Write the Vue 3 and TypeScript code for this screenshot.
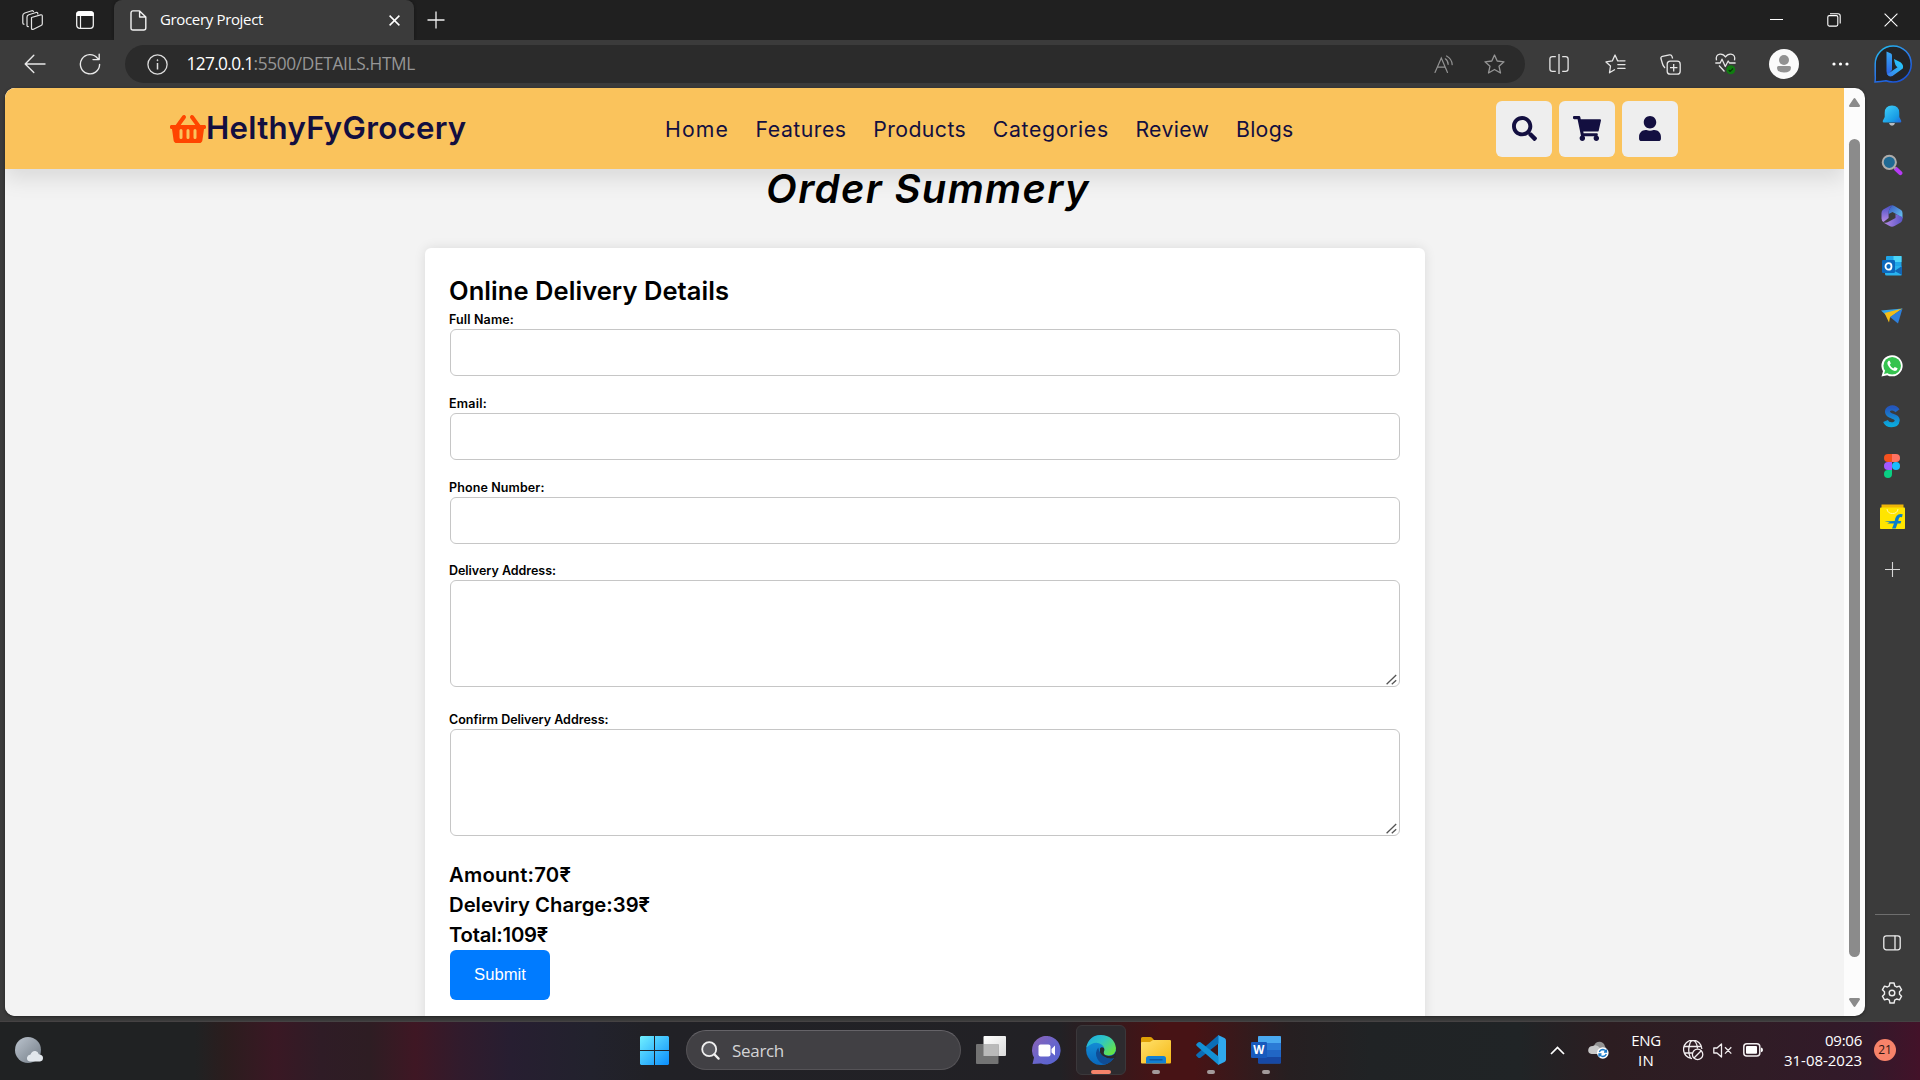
<script setup lang="ts">
import type { Directive } from 'vue'

interface NavItem { label: string; width: number }
interface Field { label: string; width: number; multiline: boolean }
interface Line { text: string; width: number }

// Spreads the letters of an element so that it takes the given width in pixels.
const vFit: Directive<HTMLElement, number> = {
  mounted(el, binding) {
    const count = (el.textContent ?? '').length
    const natural = el.getBoundingClientRect().width
    if (count > 0) el.style.letterSpacing = `${((binding.value - natural) / count).toFixed(3)}px`
  },
}

const nav: NavItem[] = [
  { label: 'Home', width: 64 },
  { label: 'Features', width: 91 },
  { label: 'Products', width: 93 },
  { label: 'Categories', width: 116 },
  { label: 'Review', width: 74 },
  { label: 'Blogs', width: 57.5 },
]

const fields: Field[] = [
  { label: 'Full Name:', width: 65, multiline: false },
  { label: 'Email:', width: 38, multiline: false },
  { label: 'Phone Number:', width: 95.5, multiline: false },
  { label: 'Delivery Address:', width: 107, multiline: true },
  { label: 'Confirm Delivery Address:', width: 159.5, multiline: true },
]

const amounts: Line[] = [
  { text: 'Amount:70₹', width: 122 },
  { text: 'Deleviry Charge:39₹', width: 201 },
  { text: 'Total:109₹', width: 99 },
]
</script>

<template>
  <div class="screen">
    <div class="tabs">
      <svg class="t-work" width="22" height="22" viewBox="0 0 22 22" fill="none" stroke="#e4e4e4" stroke-width="1.2" stroke-linejoin="round">
        <path d="M9.5 7.5 L18.6 4.8 Q20.3 4.5 20.3 6 V13.7 Q20.3 15 19 15.5 L11.5 19.2 Q9.5 20 9.5 18.2 Z" />
        <path d="M15.8 4.5 V3.6 Q15.6 2 14 2.5 L6.8 4.8 Q5 5.5 5 7 V15.7 Q5 16.7 6.8 16.7" />
        <path d="M11.5 2 Q11.5 .4 9.8 .8 L2.8 3 Q.8 3.8 .8 5.6 V13 Q.8 14.4 2.4 14.4" />
      </svg>
      <svg class="t-tabs" width="20" height="20" viewBox="0 0 20 20">
        <rect x="1.7" y="1.7" width="16.6" height="16.6" rx="3" fill="none" stroke="#eee" stroke-width="1.3" />
        <path d="M1.2 6 V4 Q1.2 1.2 4 1.2 H16 Q18.8 1.2 18.8 4 V6 Z" fill="#fff" /><path d="M5.5 6 V18" stroke="#eee" stroke-width="1.2" />
      </svg>
      <div class="tab">
        <svg width="17" height="21" viewBox="0 0 17 21" fill="none" stroke="#f2f2f2" stroke-width="1.4" stroke-linejoin="round"><path d="M3 .9 H9.6 L15.8 7 V18 Q15.8 20 13.8 20 H3 Q1 20 1 18 V3 Q1 .9 3 .9 Z M9.6 1 V7 H15.8" /></svg>
        <span v-fit="103" class="tab-title">Grocery Project</span>
        <svg class="tab-x" width="11" height="11" viewBox="0 0 11 11" stroke="#fff" stroke-width="1.5"><path d="M.6 .6 L10.4 10.4 M10.4 .6 L.6 10.4" /></svg>
      </div>
      <svg class="t-plus" width="18" height="18" viewBox="0 0 18 18" stroke="#f0f0f0" stroke-width="1.3"><path d="M9 .5 V17.5 M.5 9 H17.5" /></svg>
      <div class="win">
        <svg width="13" height="14" viewBox="0 0 13 14"><path d="M0 6.5 H13" stroke="#fff" /></svg>
        <svg width="14" height="14" viewBox="0 0 14 14" fill="none" stroke="#fff" stroke-width="1.1"><rect x=".8" y="2.6" width="10" height="10.5" rx="1.5" /><path d="M3 .7 H11 Q13.2 .7 13.2 3 V10.5" /></svg>
        <svg width="14" height="14" viewBox="0 0 14 14" stroke="#fff" stroke-width="1.1"><path d="M.6 .6 L13.4 13.4 M13.4 .6 L.6 13.4" /></svg>
      </div>
    </div>

    <div class="toolbar">
      <svg class="back" width="22" height="20" viewBox="0 0 22 20" fill="none" stroke="#e8e8e8" stroke-width="1.4" stroke-linecap="round" stroke-linejoin="round"><path d="M21 10 H1.5 M9.8 1.2 L1.2 10 L9.8 18.6" /></svg>
      <svg class="reload" width="22" height="22" viewBox="0 0 22 22" fill="none" stroke="#e8e8e8" stroke-width="1.4" stroke-linecap="round" stroke-linejoin="round"><path d="M20.6 11.5 A9.6 9.6 0 1 1 18.3 5 L20 6.5 M20.2 1.2 V6.6 H14" /></svg>
      <div class="address">
        <svg width="21" height="21" viewBox="0 0 21 21" fill="none" stroke="#ddd" stroke-width="1.3"><circle cx="10.5" cy="10.5" r="9.6" /><path d="M10.5 9 V15.5" stroke-width="1.5" /><circle cx="10.5" cy="6.2" r=".6" fill="#ddd" stroke-width=".6" /></svg>
        <span class="url"><b v-fit="67">127.0.0.1</b><i v-fit="161.5">:5500/DETAILS.HTML</i></span>
        <svg class="read" width="20" height="19" viewBox="0 0 20 19" fill="none" stroke="#929292" stroke-width="1.2" stroke-linecap="round"><path d="M1 17.5 L7.3 3 L13.5 17.5 M3.4 12.2 H11.2 M11.3 3.8 Q14 5.5 14.2 9.4 M12.6 1 Q17.8 3.8 18.2 9.6" /></svg>
        <svg class="star" width="21" height="20" viewBox="0 0 21 20" fill="none" stroke="#959595" stroke-width="1.3" stroke-linejoin="round"><path d="M10.5 1 L13.2 7 L20 7.8 L15 12.2 L16.5 19 L10.5 15.5 L4.5 19 L6 12.2 L1 7.8 L7.8 7 Z" /></svg>
      </div>
      <svg class="split" width="20" height="20" viewBox="0 0 20 20" fill="none" stroke="#e6e6e6" stroke-width="1.3"><path d="M6.8 2.6 H3.4 Q.9 2.6 .9 5 V15 Q.9 17.4 3.4 17.4 H6.8 M13.2 2.6 H16.6 Q19.1 2.6 19.1 5 V15 Q19.1 17.4 16.6 17.4 H13.2 M10 0 V20" /></svg>
      <svg class="favs" width="21" height="20" viewBox="0 0 21 20" fill="none" stroke="#e6e6e6" stroke-width="1.3" stroke-linejoin="round" stroke-linecap="round"><path d="M14 6.9 H12.7 L10 1 L7.3 6.9 L1 7.9 L5.5 12 L4.5 18.8 L9.5 15.8 M15 6.8 H20 M12.8 10.6 H20 M12.8 14.4 H20" /></svg>
      <svg class="coll" width="21" height="21" viewBox="0 0 21 21" fill="none" stroke="#e6e6e6" stroke-width="1.3" stroke-linejoin="round"><rect x="7.2" y="7.2" width="13" height="13" rx="3" /><path d="M13.7 10 V17.4 M10 13.7 H17.4 M5 14 Q2.9 12 2.4 9.5 L1 4.8 Q.5 2.9 2.4 2.4 L9.5 .9 Q11.5 .6 12 2.4 L12.6 4.5" /></svg>
      <svg class="heart" width="21" height="22" viewBox="0 0 21 22" fill="none" stroke="#e6e6e6" stroke-width="1.3" stroke-linejoin="round"><path d="M1.5 7.3 Q.3 1.7 5 1.2 Q8.5 .9 10.5 4 Q12.5 .9 16 1.2 Q20.7 1.7 19.5 7.3 M.3 10 H5.2 L7 6.2 L10.3 13.5 L13.2 8 L14.5 10 H20.6 M4 12.5 L9.5 18.5" /><circle cx="15.8" cy="16.8" r="4.5" fill="#107c10" stroke="none" /><path d="M13.7 17 L15.2 18.4 L18 15.5" stroke="#073807" /></svg>
      <svg class="avatar" width="30" height="30" viewBox="0 0 30 30"><circle cx="15" cy="15" r="15" fill="#fafafa" /><circle cx="15" cy="11" r="5" fill="#919191" /><path d="M8 18.5 Q8 17 9.5 17 H20.5 Q22 17 22 18.5 Q22 23.5 15 23.5 Q8 23.5 8 18.5" fill="#919191" /></svg>
      <svg class="dots" width="17" height="4" viewBox="0 0 17 4" fill="#fff"><circle cx="2" cy="2" r="1.6" /><circle cx="8.5" cy="2" r="1.6" /><circle cx="15" cy="2" r="1.6" /></svg>
      <svg class="bing" width="38" height="38" viewBox="0 0 38 38">
        <defs>
          <linearGradient id="bingRing" x1="0" y1="0" x2=".6" y2="1"><stop offset="0" stop-color="#20c5ee" /><stop offset=".5" stop-color="#2b82ee" /><stop offset="1" stop-color="#1a55d8" /></linearGradient>
          <linearGradient id="bingB" x1="0" y1="0" x2="0" y2="1"><stop offset="0" stop-color="#38a9f5" /><stop offset="1" stop-color="#2a62e4" /></linearGradient>
          <linearGradient id="bingC" x1="1" y1="0" x2="0" y2="1"><stop offset="0" stop-color="#23d5ff" /><stop offset="1" stop-color="#3a7bea" /></linearGradient>
        </defs>
        <path d="M1 37 Q1.5 34 1.2 30 V19 A18 18 0 1 1 19 37 Q15 37 12 35.8 Q7 36.8 1 37 Z" fill="#232427" stroke="url(#bingRing)" stroke-width="1.5" />
        <path d="M12.5 6.5 L17 8.4 Q18 9 18 10.5 V25 L14 30 Q12.5 29 12.5 26 Z" fill="url(#bingB)" />
        <path d="M20 14 L26.5 17.3 Q30 20 28.8 23.5 L18.5 31 Q15 32.5 13.2 29.3 L23.5 22.2 Q21 21.2 20 14 Z" fill="url(#bingC)" />
      </svg>
    </div>

    <div class="middle">
      <div class="page">
        <div class="view">
          <header class="header">
            <div class="logo">
              <svg width="36" height="32" viewBox="0 0 576 512" fill="#ff4500"><path fill-rule="evenodd" d="M576 216v16c0 13.255-10.745 24-24 24h-8l-26.113 182.788C514.509 462.435 494.257 480 470.37 480H105.63c-23.887 0-44.139-17.565-47.518-41.212L32 256h-8c-13.255 0-24-10.745-24-24v-16c0-13.255 10.745-24 24-24h67.341l106.78-146.821c10.395-14.292 30.407-17.453 44.701-7.058 14.293 10.395 17.453 30.408 7.058 44.701L170.477 192h235.046L326.12 82.821c-10.395-14.292-7.234-34.306 7.059-44.701 14.291-10.395 34.306-7.235 44.701 7.058L484.659 192H552c13.255 0 24 10.745 24 24zM312 392V280a24 24 0 0 0-48 0v112a24 24 0 0 0 48 0zm112 0V280a24 24 0 0 0-48 0v112a24 24 0 0 0 48 0zm-224 0V280a24 24 0 0 0-48 0v112a24 24 0 0 0 48 0z" /></svg>
              <span v-fit="260.5">HelthyFyGrocery</span>
            </div>
            <nav class="nav"><a v-for="n in nav" :key="n.label" v-fit="n.width">{{ n.label }}</a></nav>
            <div class="tools">
              <span class="tool"><svg width="25" height="25" viewBox="0 0 512 512"><path d="M505 442.7L405.3 343c-4.5-4.5-10.6-7-17-7H372c27.6-35.3 44-79.7 44-128C416 93.1 322.9 0 208 0S0 93.1 0 208s93.1 208 208 208c48.3 0 92.7-16.4 128-44v16.3c0 6.4 2.5 12.5 7 17l99.7 99.7c9.4 9.4 24.6 9.4 33.9 0l28.3-28.3c9.4-9.4 9.4-24.6.1-34zM208 336c-70.7 0-128-57.2-128-128 0-70.7 57.2-128 128-128 70.7 0 128 57.2 128 128 0 70.7-57.2 128-128 128z" /></svg></span>
              <span class="tool"><svg width="28" height="25" viewBox="0 0 576 512"><path d="M528.12 301.319l47.273-208C578.806 78.301 567.391 64 551.99 64H159.208l-9.166-44.81C147.758 8.021 137.93 0 126.529 0H24C10.745 0 0 10.745 0 24v16c0 13.255 10.745 24 24 24h69.883l70.248 343.435C147.325 417.1 136 435.222 136 456c0 30.928 25.072 56 56 56s56-25.072 56-56c0-15.674-6.447-29.835-16.824-40h209.647C430.447 426.165 424 440.326 424 456c0 30.928 25.072 56 56 56s56-25.072 56-56c0-22.172-12.888-41.332-31.579-50.405l5.517-24.276c3.413-15.018-8.002-29.319-23.403-29.319H218.117l-6.545-32h293.145c11.206 0 20.92-7.754 23.403-18.681z" /></svg></span>
              <span class="tool"><svg width="22" height="25" viewBox="0 0 448 512"><path d="M224 256c70.7 0 128-57.3 128-128S294.7 0 224 0 96 57.3 96 128s57.3 128 128 128zm89.6 32h-16.7c-22.2 10.2-46.9 16-72.9 16s-50.6-5.8-72.9-16h-16.7C60.2 288 0 348.2 0 422.4V464c0 26.5 21.5 48 48 48h352c26.5 0 48-21.5 48-48v-41.6c0-74.2-60.2-134.4-134.4-134.4z" /></svg></span>
            </div>
          </header>
          <h1 class="title"><span v-fit="324">Order Summery</span></h1>
          <form class="card">
            <h2><span v-fit="280">Online Delivery Details</span></h2>
            <div v-for="f in fields" :key="f.label" class="field">
              <label><span v-fit="f.width">{{ f.label }}</span></label>
              <div v-if="f.multiline" class="area">
                <textarea></textarea>
                <svg class="grip" width="11" height="11" viewBox="0 0 11 11" stroke="#555" stroke-width="1.3"><path d="M.6 10.3 L10.2 1 M5.8 10.3 L10.2 6.2" /></svg>
              </div>
              <input v-else type="text" />
            </div>
            <p v-for="a in amounts" :key="a.text"><span v-fit="a.width">{{ a.text }}</span></p>
            <button type="button">Submit</button>
          </form>
        </div>
        <div class="scroll">
          <svg width="11" height="9" viewBox="0 0 11 9" fill="#8b8b8b"><path d="M5.5 0 Q6 0 6.5 .8 L11 7.5 Q11 9 10 9 H1 Q0 9 0 7.5 L4.5 .8 Q5 0 5.5 0" /></svg>
          <div class="thumb"></div>
          <svg width="11" height="9" viewBox="0 0 11 9" fill="#8b8b8b"><path d="M5.5 9 Q6 9 6.5 8.2 L11 1.5 Q11 0 10 0 H1 Q0 0 0 1.5 L4.5 8.2 Q5 9 5.5 9" /></svg>
        </div>
      </div>

      <aside class="side">
        <span><svg width="20" height="22" viewBox="0 0 20 22"><defs><linearGradient id="bell" x1="0" y1="0" x2="1" y2="1"><stop offset="0" stop-color="#43d3fa" /><stop offset=".7" stop-color="#189ce5" /><stop offset="1" stop-color="#2464df" /></linearGradient></defs><path d="M7 18 H13 Q12.5 20.7 10 20.7 Q7.5 20.7 7 18" fill="#b9bcc0" /><path d="M10 .5 Q17.3 .5 17.3 8 V12 L19.3 16 Q19.5 17.5 18 17.5 H2 Q.5 17.5 .7 16 L2.7 12 V8 Q2.7 .5 10 .5" fill="url(#bell)" /></svg></span>
        <span class="side-find"><svg width="22" height="22" viewBox="0 0 22 22"><path d="M15 15 L19.3 19" stroke="#b63af5" stroke-width="4.2" stroke-linecap="round" /><path d="M12 12 L14.5 14.5" stroke="#999" stroke-width="2" /><circle cx="8.3" cy="8.3" r="6.6" fill="#206a94" stroke="#aeacab" stroke-width="2" /></svg></span>
        <span><svg width="22" height="22" viewBox="0 0 22 22"><defs><linearGradient id="m1" x1="0" y1="0" x2="0" y2="1"><stop offset="0" stop-color="#474fc4" /><stop offset="1" stop-color="#b78ae5" /></linearGradient><linearGradient id="m2" x1="0" y1="0" x2="1" y2="1"><stop offset="0" stop-color="#3855c0" /><stop offset="1" stop-color="#69ccf4" /></linearGradient><linearGradient id="m3" x1="0" y1="0" x2="1" y2="0"><stop offset="0" stop-color="#b78ae5" /><stop offset="1" stop-color="#5a55c8" /></linearGradient></defs><path d="M11 .2 L8.5 4 Q7.6 5.5 7.6 8 V13 L2.5 17 Q.5 15.8 .5 13.5 V8 Q.5 5.8 2.3 4.6 L8.5 .9 Q9.8 .2 11 .2 Z" fill="url(#m1)" /><path d="M11 .2 Q12.2 .2 13.5 1 L19.7 4.7 Q21.5 5.8 21.5 8 V13.5 L16 9.6 L11.5 7 L7.7 9 V7.5 Q7.7 5 8.8 3.4 Z" fill="url(#m2)" /><path d="M21.5 12 V14 Q21.5 16.3 19.7 17.4 L13.5 21.1 Q11 22.4 8.5 21.1 L2.3 17.4 Q5 18.3 8 16.5 L14.5 13 V9 Z" fill="url(#m3)" /></svg></span>
        <span><svg width="20" height="20" viewBox="0 0 20 20"><rect x="4" y="0" width="15.5" height="11" rx="1" fill="#1fa5e9" /><rect x="11.5" y="0" width="8" height="6" fill="#4cd5f7" /><path d="M3 10 H20 V18 Q20 19.5 18.5 19.5 H4.5 Q3 19.5 3 18 Z" fill="#28b3ef" /><path d="M20 10 L12.5 15 L20 19 Z" fill="#1265b4" /><rect x="0" y="4" width="13" height="13" rx="1.2" fill="#0c68bd" /><ellipse cx="6.5" cy="10.4" rx="3" ry="3.3" fill="none" stroke="#fff" stroke-width="1.8" /></svg></span>
        <span><svg width="22" height="16" viewBox="0 0 22 16"><path d="M0 2.5 L21.5 .5 L6 8 Z" fill="#35a6ec" /><path d="M3.5 5 L21.5 .5 L9 9.5 L8 14.5 Z" fill="#f2bd18" /><path d="M9 9 L21.5 .5 L17 15.5 Z" fill="#2e80dc" /></svg></span>
        <span><svg width="22" height="22" viewBox="0 0 22 22"><path d="M.5 21.5 L2 16.3 A10.6 10.6 0 1 1 6.2 20.2 Z" fill="#fff" /><circle cx="11.2" cy="10.8" r="8.8" fill="#35c34f" /><path d="M3 19 L4.3 14.8 L7 18 Z" fill="#35c34f" /><path d="M7.5 5.8 Q5.5 7.6 6.7 9.8 Q9.2 15 14 16 Q16.5 15.8 16.6 13.3 L13.8 11.9 L12.3 13.4 Q9.8 12.2 8.8 9.8 L9.8 8.5 L8.7 5.8 Z" fill="#fff" /></svg></span>
        <span><svg width="18" height="23" viewBox="0 0 18 23"><defs><linearGradient id="ess" x1="0" y1="0" x2="0" y2="1"><stop offset="0" stop-color="#2457bd" /><stop offset="1" stop-color="#0ba8dc" /></linearGradient></defs><path d="M14.5 5.8 Q12 2.3 8 3 Q3.5 4.2 4.8 8 Q5.5 9.8 9 11 Q14.5 12.5 14.2 15.5 Q13.7 19.7 8.5 19.8 Q4 19.8 2.5 16" fill="none" stroke="url(#ess)" stroke-width="5" /></svg></span>
        <span><svg width="16" height="24" viewBox="0 0 16 24"><path d="M8 0 H4 A4 4 0 0 0 4 8 H8 Z" fill="#f4511e" /><path d="M8 0 H12 A4 4 0 0 1 12 8 H8 Z" fill="#ff7262" /><path d="M8 8 H4 A4 4 0 0 0 4 16 H8 Z" fill="#a259ff" /><circle cx="12" cy="12" r="4" fill="#1abcfe" /><path d="M8 16 H4 A4 4 0 1 0 8 20 Z" fill="#0acf83" /></svg></span>
        <span><svg width="25" height="25" viewBox="0 0 25 25"><path d="M1.5 .5 H23.5 V5 H1.5 Z" fill="#efb607" /><rect y="3.5" width="25" height="21.5" rx=".8" fill="#ffe500" /><path d="M7 5 Q7.5 9.5 12.5 9.5 Q17.5 9.5 18 5" fill="none" stroke="#fff6a2" stroke-width="1" /><path d="M12 24.5 H15.7 L17.5 19.5 H20.5 L21.3 17 H18.3 Q18.7 13 20.6 13 L22 13.3 L22.7 10.3 Q16 8.5 14.7 17 L4.5 17.5 L10 18.5 L7 19.5 H14 Z" fill="#087dcb" /></svg></span>
        <span class="side-add"><svg width="15" height="15" viewBox="0 0 15 15" stroke="#d6d6d6" stroke-width="1.1"><path d="M7.5 0 V15 M0 7.5 H15" /></svg></span>
        <div class="rule"></div>
        <span><svg width="18" height="16" viewBox="0 0 18 16" fill="none" stroke="#eee" stroke-width="1.3"><rect x=".8" y=".8" width="16.4" height="14" rx="2.5" /><path d="M12 .8 V14.8" /></svg></span>
        <span><svg width="22" height="22" viewBox="0 0 22 22" fill="none" stroke="#eee" stroke-width="1.4" stroke-linejoin="round"><path d="M8.9 1 H13.1 L13.7 3.9 L15.6 5 L18.5 4.1 L20.6 7.8 L18.5 9.8 V12.2 L20.6 14.2 L18.5 17.9 L15.6 17 L13.7 18.1 L13.1 21 H8.9 L8.3 18.1 L6.4 17 L3.5 17.9 L1.4 14.2 L3.5 12.2 V9.8 L1.4 7.8 L3.5 4.1 L6.4 5 L8.3 3.9 Z" /><circle cx="11" cy="11" r="2.8" /></svg></span>
      </aside>
    </div>

    <div class="taskbar">
      <svg class="weather" width="29" height="32" viewBox="0 0 29 32"><defs><linearGradient id="moon" x1="0" y1="0" x2="1" y2="1"><stop offset="0" stop-color="#bcc4ce" /><stop offset="1" stop-color="#727c86" /></linearGradient></defs><ellipse cx="13" cy="16" rx="13" ry="13" fill="url(#moon)" /><path d="M15 27.5 Q11.5 27 12 23.5 Q12.5 20.8 15.5 20.5 Q17 16.5 20.5 17 Q23 17.5 23.8 20.3 Q28 20.8 28 24 Q28 27 25 27.5 Z" fill="#e2e7ec" /></svg>
      <svg class="start" width="29" height="29" viewBox="0 0 29 29"><defs><linearGradient id="win" gradientUnits="userSpaceOnUse" x1="0" y1="0" x2="29" y2="29"><stop offset="0" stop-color="#71f0ff" /><stop offset="1" stop-color="#0a8dfb" /></linearGradient></defs><path d="M1 0 H14 V14 H0 V1 Z M15 0 H28 L29 1 V14 H15 Z M0 15 H14 V29 H1 L0 28 Z M15 15 H29 V28 L28 29 H15 Z" fill="url(#win)" /></svg>
      <div class="search">
        <svg width="19" height="19" viewBox="0 0 19 19" fill="none" stroke="#f0f0f0" stroke-linecap="round"><circle cx="8.2" cy="8.2" r="7" stroke-width="1.8" fill="#5b5b60" /><path d="M13.4 13.4 L17.6 17.6" stroke-width="2.2" /></svg>
        <span v-fit="52">Search</span>
      </div>
      <span class="app"><svg width="30" height="28" viewBox="0 0 30 28"><defs><linearGradient id="tv" x1="0" y1="0" x2="1" y2="1"><stop offset="0" stop-color="#fff" /><stop offset="1" stop-color="#dadada" /></linearGradient></defs><rect x="7.5" width="22.5" height="20" rx="1" fill="url(#tv)" /><rect y="8" width="22.5" height="20" rx="1" fill="#737373" /><rect x="7.5" y="8" width="15" height="12" fill="#b9b9b9" /></svg></span>
      <span class="app"><svg width="29" height="29" viewBox="0 0 29 29"><defs><linearGradient id="chat" x1="0" y1="0" x2="1" y2="1"><stop offset="0" stop-color="#8e62b4" /><stop offset=".5" stop-color="#6965cb" /><stop offset="1" stop-color="#5363d2" /></linearGradient></defs><path d="M.5 28 L2 21.5 A14.3 14.3 0 1 1 9 27.5 Z" fill="url(#chat)" /><rect x="6.5" y="8.5" width="12" height="12" rx="2" fill="#fff" /><path d="M19.5 13 L23 9.5 V19.5 L19.5 16.5 Z" fill="#fff" /></svg></span>
      <span class="app active"><svg width="30" height="30" viewBox="0 0 30 30"><defs><linearGradient id="edgeA" x1="0" y1="0" x2="1" y2=".7"><stop offset="0" stop-color="#1aa9e4" /><stop offset=".5" stop-color="#2fc6c4" /><stop offset="1" stop-color="#66e545" /></linearGradient><linearGradient id="edgeB" x1="0" y1="0" x2="0" y2="1"><stop offset="0" stop-color="#1698dc" /><stop offset="1" stop-color="#0968bd" /></linearGradient></defs><path d="M15 0 A15 15 0 1 0 27.5 23.5 L30 15 Z" fill="url(#edgeB)" /><path d="M.3 12.5 Q3 0 15 0 Q28 .5 30 13 Q30 20.5 22 20.5 Q16.5 20 17.5 16.8 Q19.5 12.5 15.5 9.5 Q9 4.8 .3 12.5" fill="url(#edgeA)" /><path d="M12.3 12.5 Q8 18 11.5 24 Q14 28.5 19 29.5 Q24.5 28 27.5 23.5 Q28 22 26.5 22.5 Q23 24 19.5 22.5 Q13 19.5 12.3 12.5" fill="#0f4d96" /><path d="M18 13 Q19 15 17.8 17 Q17 20.3 22.5 21 Q27 21.5 30 17 V22.5 Q25.8 24.2 21 23 Q12.5 20.5 14 13.5 Q15.5 11.5 18 13" fill="#29282d" /></svg><i></i></span>
      <span class="app"><svg width="30" height="28" viewBox="0 0 30 28"><defs><linearGradient id="fold" x1="0" y1="0" x2="1" y2="1"><stop offset="0" stop-color="#ffe16c" /><stop offset="1" stop-color="#f6b815" /></linearGradient></defs><path d="M0 9 V2.5 Q0 1 1.5 1 H9 Q10.5 1 11.5 2.2 L13 4 H28.5 Q30 4 30 5.5 V9 Z" fill="#dfa006" /><path d="M0 7 Q0 6 1 6 H9 L12 4 H29 Q30 4 30 5.5 V26.5 Q30 27.5 29 27.5 H1 Q0 27.5 0 26.5 Z" fill="url(#fold)" /><path d="M5 27.5 V22.5 Q5 20 7.5 20 H22.5 Q25 20 25 22.5 V27.5 Z" fill="#1280d3" /><path d="M8.5 23.8 H21.5" stroke="#0d529b" stroke-width="1.3" /></svg><i></i></span>
      <span class="app"><svg width="30" height="30" viewBox="0 0 30 30"><path d="M22 0 L28.5 3 Q30 3.8 30 5.5 V24.5 Q30 26 28.5 27 L22 30 Z" fill="#30a8ed" /><path d="M22.5 0 V8.5 L4.5 22.8 Q3 23.5 2 22.5 L.5 21 Q-.3 20 .8 19 Z" fill="#0b6db6" /><path d="M22.5 30 V21.5 L4.5 7.2 Q3 6.5 2 7.5 L.5 9 Q-.3 10 .8 11 Z" fill="#1390d6" /></svg><i></i></span>
      <span class="app"><svg width="30" height="28" viewBox="0 0 30 28"><rect x="7" width="23" height="27.5" rx="1.3" fill="#2166c5" /><path d="M7 7 V1.3 Q7 0 8.3 0 H28.7 Q30 0 30 1.3 V7 Z" fill="#4aa9f0" /><rect x="7" y="7" width="23" height="7" fill="#2b7bd6" /><path d="M7 21 H30 V26.2 Q30 27.5 28.7 27.5 H8.3 Q7 27.5 7 26.2 Z" fill="#1748a4" /><rect y="6" width="16" height="16" rx="1.3" fill="#185abd" /><text x="7.8" y="18.2" text-anchor="middle" font-family="'Open Sans', sans-serif" font-weight="700" font-size="11.5" fill="#fff">W</text></svg><i></i></span>
      <div class="tray">
        <svg width="15" height="9" viewBox="0 0 15 9" fill="none" stroke="#fff" stroke-width="1.7"><path d="M1 8 L7.5 1.4 L14 8" /></svg>
        <svg class="cloud" width="21" height="18" viewBox="0 0 21 18"><path d="M6 5 Q7.5 .5 12 .8 Q16 1.3 17 5.5 L20 10 H10 Z" fill="#929292" /><path d="M3.5 13 Q0 12.5 .2 9 Q.7 5.2 4.7 5 Q9 3 12 7 L16 9 V13 Z" fill="#c8c8c8" /><circle cx="14.8" cy="12" r="5.8" fill="#fff" /><path d="M11.3 11 Q12.3 8.5 15 8.5 Q17.3 8.8 18.2 10.5 M18.5 8.5 V11 H16 M18.3 13 Q17.3 15.5 14.7 15.5 Q12.3 15.2 11.4 13.5 M11 15.7 V13 H13.5" fill="none" stroke="#1979c8" stroke-width="1.3" /></svg>
        <div class="lang"><span v-fit="29.5">ENG</span><span v-fit="16">IN</span></div>
        <svg class="globe" width="21" height="21" viewBox="0 0 21 21" fill="none" stroke="#f1edef" stroke-width="1.3"><path d="M9 18.5 A9.2 9.2 0 1 1 18.9 9 M7.4 18 Q4 10 7.4 2 Q10 -.6 12.5 2 Q14.5 5 14.5 8.5 M1.5 6.5 H18.2 M1.5 13 H9.5" /><circle cx="14.6" cy="14.4" r="5.2" /><path d="M11 18 L18.2 10.8" /></svg>
        <svg class="speaker" width="19" height="15" viewBox="0 0 19 15" fill="none" stroke="#f1edef" stroke-width="1.3" stroke-linejoin="round"><path d="M.8 5 H4 L8.5 .9 V14.1 L4 10 H.8 Z M12 4.3 L18.3 10.6 M18.3 4.3 L12 10.6" /></svg>
        <svg class="battery" width="20" height="14" viewBox="0 0 20 14"><rect x=".8" y=".8" width="16" height="12.2" rx="3" fill="none" stroke="#f1edef" stroke-width="1.5" /><rect x="3" y="3" width="11" height="7.8" rx="1" fill="#fff" /><path d="M18 4.6 Q20 5 20 6.9 Q20 8.8 18 9.2 Z" fill="#fff" /></svg>
        <div class="clock"><span v-fit="37">09:06</span><span v-fit="78">31-08-2023</span></div>
        <b class="badge">21</b>
      </div>
    </div>
  </div>
</template>

<style>
html, body { margin: 0; overflow: hidden; background: #3b3b3b; }
</style>

<style scoped>
* { box-sizing: border-box; }
svg { display: block; flex: none; }
.screen { width: 1920px; height: 1080px; display: flex; flex-direction: column; overflow: hidden; background: #3b3b3b; font-family: "Open Sans", "Noto Sans", sans-serif; }
span, a, b, i { white-space: nowrap; }

.tabs { height: 40px; flex: none; display: flex; align-items: center; background: #202020; }
.t-work { margin-left: 22px; margin-top: 1px; }
.t-tabs { margin-left: 31px; }
.tab { width: 300px; height: 40px; margin-left: 19px; padding-left: 16px; display: flex; align-items: center; background: #3b3b3b; border-radius: 8px 8px 0 0; box-shadow: 0 0 3px #151515; clip-path: inset(0 -4px 0 -4px); }
.tab-title { margin-left: 13px; margin-top: -2px; color: #fff; font-size: 15px; line-height: 20px; }
.tab-x { margin-left: 126px; margin-top: 1px; }
.t-plus { margin-left: 12.5px; margin-bottom: 1px; }
.win { display: flex; align-items: center; gap: 43px; margin-left: auto; margin-right: 22px; }
.win svg:first-child { margin-right: 1px; }

.toolbar { height: 48px; flex: none; display: flex; align-items: center; background: #3b3b3b; }
.back { margin-left: 24px; }
.reload { margin-left: 33px; }
.address { width: 1400px; height: 38px; margin-left: 24px; padding-left: 22px; display: flex; align-items: center; border-radius: 19px; background: #2b2b2b; }
.url { display: flex; margin-left: 18.5px; font-size: 17.3px; line-height: 24px; }
.url b { display: block; font-weight: 400; color: #fff; }
.url i { display: block; font-style: normal; color: #969696; }
.read { margin-left: auto; }
.star { margin-left: 29.5px; margin-right: 20.5px; }
.split { margin-left: 24px; }
.favs { margin-left: 36px; }
.coll { margin-left: 34px; }
.heart { margin-left: 34px; }
.avatar { margin-left: 33px; }
.dots { margin-left: 33px; }
.bing { margin-left: 25px; }

.middle { height: 933px; flex: none; display: flex; padding-left: 5px; }
.page { width: 1860px; height: 928px; display: flex; overflow: hidden; border-radius: 10px; background: #fcfcfc; box-shadow: 0 1px 3px #222; }
.view { width: 1839px; height: 928px; overflow: hidden; background: #f3f3f3; font-family: Inter, "Open Sans", sans-serif; }
.header { position: relative; z-index: 1; height: 81px; display: flex; align-items: center; padding-left: 165px; background: #fac35c; box-shadow: 0 10px 20px rgba(0, 0, 0, .1); color: #130f40; }
.logo { width: 495px; display: flex; align-items: center; font-size: 31.25px; font-weight: 600; line-height: 40px; }
.logo span { margin-top: -1px; }
.nav { width: 831px; display: flex; gap: 26.6px; font-size: 21.25px; font-weight: 400; line-height: 30px; }
.nav a { display: block; margin-top: 1px; }
.tools { display: flex; gap: 7px; }
.tool { width: 56px; height: 56px; display: flex; align-items: center; justify-content: center; border-radius: 6px; background: #eee; }
.tool svg { fill: #130f40; margin-bottom: 1px; }
.title { height: 79px; margin: 0; padding-left: 761px; color: #000; font-size: 40px; font-weight: 600; font-style: italic; line-height: 40px; }
.title span { display: inline-block; }
.card { width: 1000px; height: 800px; margin-left: 420px; padding: 25px; border-radius: 6px; background: #fff; box-shadow: 0 0 12px rgba(0, 0, 0, .1); }
.card span { display: inline-block; margin-left: -1px; }
.card h2 { height: 37px; margin: 0; font-size: 25.5px; font-weight: 600; line-height: 36px; }
.card label { display: block; height: 19px; font-size: 12.5px; font-weight: 600; line-height: 19px; }
.field { height: 84px; }
.field:has(.area) { height: 149px; }
.field:nth-of-type(3) { height: 83px; }
.field:nth-of-type(5) { height: 150px; }
.field input { display: block; width: 950px; height: 47px; margin: 0; border: 1px solid #c6c6c6; border-radius: 6px; background: #fff; }
.area { position: relative; height: 107px; }
.area textarea { display: block; width: 950px; height: 107px; margin: 0; border: 1px solid #c6c6c6; border-radius: 6px; resize: none; background: #fff; }
.grip { position: absolute; right: 3px; bottom: 2px; }
.card p { height: 30px; margin: 0; font-size: 20.3px; font-weight: 600; line-height: 30px; }
.card button { display: block; width: 100px; height: 50px; padding: 0; border: 0; border-radius: 6px; background: #007bff; color: #fff; font-family: "Liberation Sans", Arial, sans-serif; font-size: 16.67px; }
.scroll { width: 21px; display: flex; flex-direction: column; align-items: center; padding-top: 10px; }
.thumb { width: 11px; height: 818px; margin: 32px 0 41px; border-radius: 6px; background: #8b8b8b; }

.side { width: 54px; display: flex; flex-direction: column; align-items: center; padding-top: 3px; }
.side span { width: 54px; height: 50px; flex: none; display: flex; align-items: center; justify-content: center; }
.side .side-find svg { margin-bottom: 2px; }
.side .side-add { margin-top: 3px; }
.rule { width: 35px; height: 1px; margin: 320px 0 3px; flex: none; background: #6e6e6e; }

.taskbar { height: 59px; flex: none; display: flex; align-items: center; padding-bottom: 2px; color: #fff; border-top: 1px solid #454243; background: linear-gradient(90deg, #202223 0, #202223 195px, #2b1d1e 225px, #3a1824 275px, #2f1c26 320px, #2e1d23 370px, #3f1724 415px, #311b2c 460px, #271e31 510px, #22222d 590px, #212126 650px, #222125 1060px, #35191c 1110px, #471315 1160px, #471315 1195px, #351a1c 1245px, #261f21 1290px, #202325 1370px, #202426 1520px, #2c1d21 1610px, #301c26 1760px, #33192a 1870px, #431229 1920px); }
.weather { margin-left: 15px; }
.start { margin-left: 596px; }
.search { width: 275px; height: 40px; margin-left: 17px; padding-left: 14px; display: flex; align-items: center; border: 1px solid #555357; border-top-color: #656368; border-radius: 20px; background: #414044; }
.search span { margin-left: 12px; font-size: 17px; color: #d4d4d6; }
.app { position: relative; width: 50px; height: 50px; margin-left: 5px; display: flex; align-items: center; justify-content: center; }
.app i { position: absolute; bottom: 1px; left: 21px; width: 8px; height: 4px; border-radius: 2px; background: #a39a9b; }
.active { border: 1px solid #3b383b; border-radius: 6px; background: #2d2b2f; }
.active i { left: 14px; bottom: 0; width: 20px; background: #f7836a; }
.tray { margin-left: auto; margin-right: 24px; display: flex; align-items: center; }
.cloud { margin-left: 23px; }
.lang { width: 30px; margin-left: 22px; display: flex; flex-direction: column; align-items: center; font-size: 15px; line-height: 20px; }
.globe { margin-left: 22px; }
.speaker { margin-left: 9px; }
.battery { margin-left: 11px; }
.clock { width: 79px; margin-left: 20px; margin-bottom: 1px; display: flex; flex-direction: column; align-items: flex-end; font-size: 15px; line-height: 20px; }
.badge { width: 22px; height: 22px; margin-left: 12px; border-radius: 50%; background: #f7836a; color: #2b1512; font-size: 12px; font-weight: 400; line-height: 21px; text-align: center; }
</style>
